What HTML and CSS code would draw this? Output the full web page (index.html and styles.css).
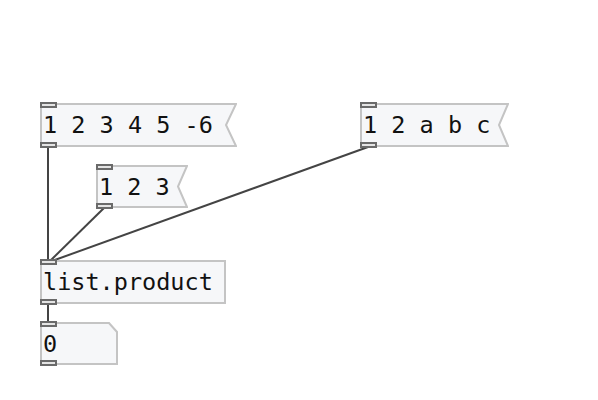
FILE: index.html
```html
<!DOCTYPE html>
<html lang="en">
<head>
    <meta charset="UTF-8">
    <meta name="viewport" content="width=device-width, initial-scale=1.0">
    <title>list.product</title>
    <link rel="stylesheet" href="styles.css">
</head>
<body>
    <div class="canvas">
        <!-- patch cords -->
        <svg class="cords" width="598" height="400" viewBox="0 0 598 400">
            <line x1="48" y1="147" x2="48" y2="261"/>
            <line x1="104" y1="208" x2="50" y2="261"/>
            <line x1="368" y1="147" x2="52" y2="261"/>
            <line x1="48" y1="303" x2="48" y2="322"/>
        </svg>

        <div class="node msg m1">
            <svg class="shape" viewBox="0 0 197 44" preserveAspectRatio="none"><path d="M1 1 H196 L186 22 L196 43 H1 Z"/></svg>
            <span class="label">1 2 3 4 5 -6</span>
            <i class="inlet"></i><i class="outlet"></i>
        </div>

        <div class="node msg m2">
            <svg class="shape" viewBox="0 0 149 44" preserveAspectRatio="none"><path d="M1 1 H148 L139 22 L148 43 H1 Z"/></svg>
            <span class="label">1 2 a b c</span>
            <i class="inlet"></i><i class="outlet"></i>
        </div>

        <div class="node msg m3">
            <svg class="shape" viewBox="0 0 92 43" preserveAspectRatio="none"><path d="M1 1 H91 L82 21.5 L91 42 H1 Z"/></svg>
            <span class="label">1 2 3</span>
            <i class="inlet"></i><i class="outlet"></i>
        </div>

        <div class="node obj">
            <span class="label">list.product</span>
            <i class="inlet"></i><i class="outlet"></i>
        </div>

        <div class="node num">
            <svg class="shape" viewBox="0 0 78 43" preserveAspectRatio="none"><path d="M1 1 H69 L77 10 V42 H1 Z"/></svg>
            <span class="label">0</span>
            <i class="inlet"></i><i class="outlet"></i>
        </div>
    </div>
</body>
</html>
```

FILE: styles.css
```css
body {
    margin: 0;
    background-color: #ffffff;
    font-family: 'DejaVu Sans Mono', 'Liberation Mono', monospace;
}
.canvas {
    position: relative;
    width: 598px;
    height: 400px;
    overflow: hidden;
}
.cords {
    position: absolute;
    left: 0;
    top: 0;
}
.cords line {
    stroke: #444444;
    stroke-width: 2;
}
.node {
    position: absolute;
    box-sizing: border-box;
    height: 44px;
}
.shape {
    position: absolute;
    left: 0;
    top: 0;
    width: 100%;
    height: 100%;
}
.shape path {
    fill: #f6f7f9;
    stroke: #c4c4c4;
    stroke-width: 2;
}
.label {
    position: relative;
    display: block;
    padding-left: 3px;
    font-size: 23.5px;
    line-height: 45px;
    color: #111111;
    white-space: pre;
}
.inlet,
.outlet {
    position: absolute;
    left: 0;
    width: 17px;
    height: 6px;
    box-sizing: border-box;
    background-color: #e4e4e4;
    border: 2px solid #6a6a6a;
}
.inlet {
    top: -1px;
}
.outlet {
    bottom: -1px;
}
.m1 {
    left: 40px;
    top: 103px;
    width: 197px;
}
.m2 {
    left: 360px;
    top: 103px;
    width: 149px;
}
.m3 {
    left: 96px;
    top: 165px;
    width: 92px;
    height: 43px;
}
.obj {
    left: 40px;
    top: 260px;
    width: 186px;
    height: 44px;
    background-color: #f6f7f9;
    border: 2px solid #c4c4c4;
}
.obj .label {
    line-height: 41px;
    padding-left: 1px;
}
.obj .inlet,
.obj .outlet {
    left: -2px;
}
.obj .inlet {
    top: -3px;
}
.obj .outlet {
    bottom: -3px;
}
.num {
    left: 40px;
    top: 322px;
    width: 78px;
    height: 43px;
}
```
